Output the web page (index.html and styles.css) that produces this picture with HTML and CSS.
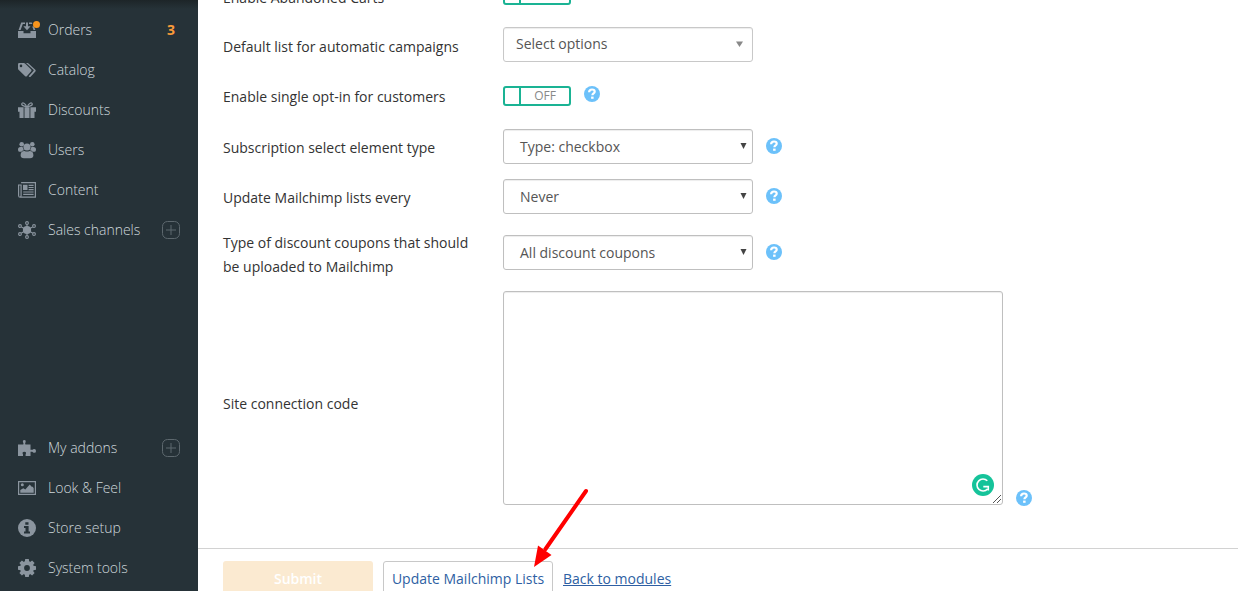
FILE: index.html
```html
<!DOCTYPE html>
<html lang="en">
<head>
<meta charset="utf-8">
<title>Mailchimp settings</title>
<link rel="stylesheet" href="styles.css">
</head>
<body>
<svg class="defs" width="0" height="0">
  <symbol id="help" viewBox="0 0 16 16"><circle cx="8" cy="8" r="8" fill="#6cc1fa"/><path d="M5.100 6.200C5.200 4.300 6.400 3.500 8 3.500s2.700.8 2.700 2.200c0 1.700-2.300 1.800-2.300 3.600" fill="none" stroke="#fff" stroke-width="2.200"/><path d="M7.100 10.600h2.500v2.200H7.100z" fill="#fff"/></symbol>
  <symbol id="plus" viewBox="0 0 18 18"><rect x=".5" y=".5" width="17" height="17" rx="5"/><path d="M4 9h10M9 4v10"/></symbol>
</svg>
<div class="app">
  <nav class="sidebar">
    <div class="menu">
      <a class="item"><svg class="icon" viewBox="0 0 18 18"><path d="M0 10h5.500v2.200h7V10H18v7H0z"/><path d="M3.200 1.500H7V3H4.800L2.600 9H.6zM11 1.500h2.800l.6 1.500H11zM14.200 5.500h1.700L17.400 9h-1.900zM8 1.500h2v3.700h2.600L9 9.200 5.400 5.200H8z"/></svg><i class="dot"></i><span>Orders</span><b class="count">3</b></a>
      <a class="item"><svg class="icon" viewBox="0 0 18 18"><path fill-rule="evenodd" d="M0 3.200Q0 2 1.200 2h4.600q.7 0 1.200.5l6.200 6.100q.7.8 0 1.600l-4.400 5q-.8.7-1.600 0L.5 8.700Q0 8.200 0 7.500zM3 3.600a1.300 1.300 0 1 0 0 2.600 1.300 1.300 0 0 0 0-2.600z"/><path d="M8 2h1.500q.6 0 1 .5l6.800 6.300q.8.800.1 1.600l-4.800 5.300q-.7.7-1.500 0l-.4-.4 4.700-5.200q.6-.6 0-1.300z"/></svg><span>Catalog</span></a>
      <a class="item"><svg class="icon" viewBox="0 0 18 18"><path d="M0 6.300h5.600v4.500H0zM12.400 6.300H18v4.500h-5.600zM6.500 6.300h5V17h-5zM1.500 10.800h4.100V17H1.500zM12.400 10.800h4.100V17h-4.100z"/><path d="M8.700 6C7.500 2.500 4.200.6 3.700 3c-.3 1.900 2.200 1.800 5 3zM9.300 6c1.200-3.500 4.500-5.400 5-3 .3 1.900-2.200 1.800-5 3z" fill="none" stroke="#8b959f" stroke-width="1.200"/></svg><span>Discounts</span></a>
      <a class="item"><svg class="icon" viewBox="0 0 18 18"><circle cx="3.700" cy="3.200" r="2.300"/><circle cx="14.300" cy="3.200" r="2.300"/><circle cx="9" cy="6" r="3.600"/><path d="M0 8.600Q0 6 2.400 6h2.200q.4 2 1.400 3.200-2 .4-2.600 1.600H1.300Q0 10.800 0 8.600zM18 8.600Q18 6 15.600 6h-2.200q-.4 2-1.400 3.200 2 .4 2.600 1.600h2.100q1.300 0 1.300-2.200zM2.600 14.200q0-4.300 3.900-4.300Q9 11.300 11.500 9.900q3.900 0 3.900 4.300 0 3-3.400 3H6q-3.400 0-3.400-3z"/></svg><span>Users</span></a>
      <a class="item"><svg class="icon" viewBox="0 0 18 18"><g fill="none" stroke="#8b959f" stroke-width="1.200"><path d="M3.100 1.700h14.300v14.500H2.100Q.6 16.200.6 14.600V4h2.500v10.400q0 1.200-1 1.800M10.600 4.300h5M10.600 6.500h5M10.600 8.700h5M5.200 11h10.400M5.200 13.300h10.400"/></g><path d="M5 3.800h4.500V9H5z"/></svg><span>Content</span></a>
      <a class="item"><svg class="icon" viewBox="0 0 18 18"><circle cx="9" cy="9" r="4.100"/><g fill="none" stroke="#8b959f" stroke-width="1.100"><path d="M9 3.500v11M3.400 5.900l11.200 6.200M3.400 12.100l11.200-6.200"/><circle cx="9" cy="2" r="1.400"/><circle cx="9" cy="16" r="1.400"/><circle cx="2" cy="5" r="1.400"/><circle cx="16" cy="5" r="1.400"/><circle cx="2" cy="13" r="1.400"/><circle cx="16" cy="13" r="1.400"/></g></svg><span>Sales channels</span><svg class="plus"><use href="#plus"/></svg></a>
    </div>
    <div class="menu">
      <a class="item"><svg class="icon" viewBox="0 0 18 18"><path d="M0 5.500h5.200q.7-.4.100-1.400Q4.100 1 6.300 1t1 3.100q-.5 1 .2 1.400h5v5.300h1.600q.6 0 1-.6 2.900-.8 2.900 1.700t-2.900 1.700q-.4-.8-1-.8h-1.600V17H7.600v-1.500q1.400-2.700-1.300-2.700T5 15.500V17H0z"/></svg><span>My addons</span><svg class="plus"><use href="#plus"/></svg></a>
      <a class="item"><svg class="icon" viewBox="0 0 18 18"><path d="M.6 2.600h16.800v12.800H.6z" fill="none" stroke="#8b959f" stroke-width="1.200"/><circle cx="4.300" cy="5.800" r="1.500"/><path d="M2.300 13.700v-2.600l3-1.800 2 1.200 4.400-5 2 2.200h1l1 1.500v4.500z"/></svg><span>Look &amp; Feel</span></a>
      <a class="item"><svg class="icon" viewBox="0 0 18 18"><circle cx="9" cy="9" r="9"/><path d="M7.300 3.200h3.200v2.600H7.300zM6 7h4.600v5.500H12v2H6v-2h1.500V9H6z" fill="#263238"/></svg><span>Store setup</span></a>
      <a class="item"><svg class="icon" viewBox="0 0 18 18"><circle cx="9" cy="9" r="4.900" fill="none" stroke="#8b959f" stroke-width="4"/><path d="M7.200 0h3.600l.6 4H6.600zM7.200 18h3.600l.6-4H6.600zM0 7.200v3.600l4 .6V6.600zM18 7.200v3.600l-4 .6V6.600zM1.400 3.900l2.500-2.500 3 2.300-3.200 3.200zM16.600 3.900l-2.500-2.500-3 2.300 3.200 3.200zM1.400 14.100l2.500 2.500 3-2.300-3.200-3.200zM16.600 14.100l-2.500 2.500-3-2.300 3.200-3.200z"/></svg><span>System tools</span></a>
    </div>
  </nav>
  <main class="main">
    <form class="form">
      <div class="row carts"><label>Enable Abandoned Carts</label><div class="switch"></div></div>
      <div class="row list"><label>Default list for automatic campaigns</label><div class="select multi"><span>Select options</span><svg class="caret" viewBox="0 0 7 6"><path d="M0 .5h7L3.500 6z"/></svg></div></div>
      <div class="row optin"><label>Enable single opt-in for customers</label><div class="switch"><span>OFF</span></div><svg class="help"><use href="#help"/></svg></div>
      <div class="row type"><label>Subscription select element type</label><div class="select"><span>Type: checkbox</span><svg class="caret" viewBox="0 0 7 6"><path d="M.5 0h6l-3 6z"/></svg></div><svg class="help"><use href="#help"/></svg></div>
      <div class="row every"><label>Update Mailchimp lists every</label><div class="select"><span>Never</span><svg class="caret" viewBox="0 0 7 6"><path d="M.5 0h6l-3 6z"/></svg></div><svg class="help"><use href="#help"/></svg></div>
      <div class="row coupons"><label>Type of discount coupons that should be uploaded to Mailchimp</label><div class="select"><span>All discount coupons</span><svg class="caret" viewBox="0 0 7 6"><path d="M.5 0h6l-3 6z"/></svg></div><svg class="help"><use href="#help"/></svg></div>
      <div class="row code"><label>Site connection code</label><div class="area">
        <svg class="checker" viewBox="0 0 22 22"><circle cx="11" cy="11" r="11" fill="#15c39a"/><path d="M15.300 6.800A6 6 0 1 0 15.500 15M11.300 12.600h5v3.800" fill="none" stroke="#fff" stroke-width="1.600"/></svg>
        <svg class="grip" viewBox="0 0 8 8"><path d="M0 8 8 0M4 8l4-4" fill="none" stroke="#555" stroke-width="1"/></svg>
      </div><svg class="help"><use href="#help"/></svg></div>
    </form>
    <footer class="actions"><a class="submit">Submit</a><a class="update">Update Mailchimp Lists</a><a class="back">Back to modules</a></footer>
  </main>
  <svg class="pointer" viewBox="0 0 60 84"><path d="M55 6 14.500 64" stroke="#f00" stroke-width="4" stroke-linecap="round"/><path d="M3 82 7 60.500l13.500 9.500z" fill="#f00"/></svg>
</div>
</body>
</html>
```
FILE: styles.css
```css
*, *::before { box-sizing: border-box; }
body { margin: 0; font: 14px/24px "Open Sans", sans-serif; color: #333; background: #fff; }
.defs { position: absolute; }
.app { position: relative; display: flex; width: 1238px; height: 591px; overflow: hidden; }
.sidebar { width: 198px; padding: 10px 0 3px; display: flex; flex-direction: column; justify-content: space-between; background: linear-gradient(#1d2528, #263238 9px); }
.item { position: relative; display: flex; align-items: center; height: 40px; padding: 0 18px; color: #cfd8dc; font-weight: 300; white-space: nowrap; }
.icon { width: 18px; height: 18px; margin-right: 12px; fill: #8b959f; flex: none; }
.dot { position: absolute; left: 33px; top: 11px; width: 7px; height: 7px; border-radius: 50%; background: #f7941d; }
.count { margin-left: auto; margin-right: 5px; color: #f99b3a; font-weight: 700; }
.plus { width: 18px; height: 18px; margin-left: auto; fill: none; stroke: #5d686e; }
.main { flex: 1; display: flex; flex-direction: column; }
.form { flex: none; height: 563px; margin-top: -15px; padding-left: 25px; }
.row { display: flex; align-items: flex-start; }
.row label { width: 250px; margin-right: 30px; }
.carts { height: 42px; }
.carts label { margin-top: 1px; }
.list { height: 59px; }
.list label { margin-top: 8px; }
.optin { height: 43px; }
.optin label { margin-top: -1px; }
.type { height: 50px; }
.every, .coupons { height: 56px; }
.type label, .every label { margin-top: 7px; }
.coupons label { margin-top: -4px; }
.code label { margin-top: 101px; }
.select { display: flex; align-items: center; justify-content: space-between; width: 250px; height: 35px; padding: 0 5.5px 0 16px; border: 1px solid #bfbfbf; border-radius: 3px; color: #555; box-shadow: inset 0 1px 1px rgba(0,0,0,.075); }
.caret { width: 7px; height: 6px; margin-bottom: 2px; fill: #444; }
.multi { padding: 0 9px 2px 12px; border-color: #c8c8c8; }
.multi .caret { margin: 1px 0 0; fill: #888; }
.switch { width: 68px; height: 20px; border: 2px solid #1ab394; border-radius: 3px; display: flex; }
.switch::before { content: ""; flex: none; width: 16px; border-right: 2px solid #1ab394; }
.switch span { flex: 1; text-align: center; font-size: 12px; line-height: 15px; color: #888; }
.help { width: 16px; height: 16px; margin: 9px 0 0 13px; }
.optin .help { margin-top: 0; }
.area { position: relative; width: 500px; height: 214px; border: 1px solid #bfbfbf; border-radius: 3px; box-shadow: inset 0 1px 1px rgba(0,0,0,.075); }
.code .help { margin-top: 199px; }
.checker { position: absolute; right: 8px; bottom: 8px; width: 22px; height: 22px; }
.grip { position: absolute; right: 1px; bottom: 1px; width: 8px; height: 8px; }
.actions { display: flex; align-items: flex-start; flex: 1; padding: 12px 0 0 25px; border-top: 1px solid #d2d2d2; color: #2e5fa3; }
.submit, .update { height: 36px; border-radius: 3px; line-height: 36px; text-align: center; }
.submit { width: 150px; background: #fbead1; color: #fff; font-weight: 600; }
.update { width: 170px; margin: 0 10px; border: 1px solid #c8c8c8; line-height: 34px; white-space: nowrap; }
.back { line-height: 36px; text-decoration: underline; }
.pointer { position: absolute; left: 531px; top: 485px; width: 60px; height: 84px; }
```
